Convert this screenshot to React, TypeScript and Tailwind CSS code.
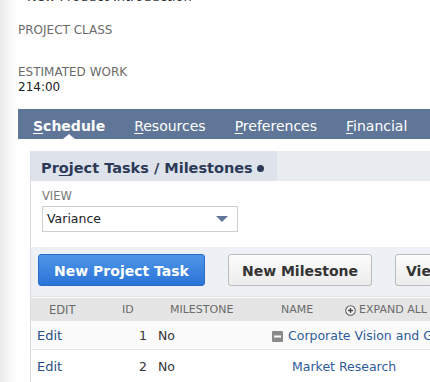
import React from 'react';

const font = { fontFamily: '"DejaVu Sans", Verdana, sans-serif' };

const Tab: React.FC<{ label: string; active?: boolean }> = ({ label, active }) => (
  <div className={`relative h-full shrink-0 flex items-center pt-[4px] text-[14px] text-white ${active ? 'font-bold' : ''}`}>
    <span>
      <span className="underline underline-offset-2">{label[0]}</span>
      {label.slice(1)}
    </span>
    {active && (
      <span className="absolute bottom-0 left-1/2 -translate-x-1/2 w-0 h-0 border-l-[6px] border-r-[6px] border-b-[5px] border-l-transparent border-r-transparent border-b-white" />
    )}
  </div>
);

const MinusBox = () => (
  <svg width="11" height="11" viewBox="0 0 11 11" className="shrink-0">
    <rect x="0" y="0" width="11" height="11" rx="1" fill="#8a8a8a" />
    <rect x="2" y="4.5" width="7" height="2" fill="#fff" />
  </svg>
);

const PlusCircle = () => (
  <svg width="11" height="11" viewBox="0 0 12 12" className="shrink-0">
    <circle cx="6" cy="6" r="5.2" fill="#fff" stroke="#555" strokeWidth="1.1" />
    <path d="M6 3.2v5.6M3.2 6h5.6" stroke="#444" strokeWidth="1.5" />
  </svg>
);

const rows = [
  { id: 1, milestone: 'No', name: 'Corporate Vision and Goals', parent: true },
  { id: 2, milestone: 'No', name: 'Market Research', parent: false },
];

export default function App() {
  return (
    <div className="w-[430px] h-[382px] overflow-hidden bg-white flex" style={font}>
      <div className="w-[18px] shrink-0 bg-gradient-to-r from-[#ebebeb] via-[#f6f6f6] to-white" />
      <div className="flex-1 min-w-0">
        {/* summary fields */}
        <div className="-mt-[11px] pl-[9px] text-[13px] leading-[16px] text-[#333] whitespace-nowrap">New Product Introduction</div>
        <div className="mt-[17px] text-[12px] leading-[16px] text-[#6b6b6b]">PROJECT CLASS</div>
        <div className="mt-[26px] text-[12px] leading-[16px] text-[#6b6b6b]">ESTIMATED WORK</div>
        <div className="text-[12px] leading-[14px] text-[#222]">214:00</div>

        {/* subtabs */}
        <div className="mt-[15px] h-[30px] bg-[#5f7698] flex pl-[15px] gap-[29px] whitespace-nowrap overflow-hidden">
          <Tab label="Schedule" active />
          <Tab label="Resources" />
          <Tab label="Preferences" />
          <Tab label="Financial" />
        </div>

        {/* panel */}
        <div className="mt-[12px] ml-[12px] border-l border-[#d8dce3]">
          <div className="h-[30px] flex bg-[#e8ebf0]">
            <div className="w-[246px] shrink-0 bg-[#dee3eb] flex items-center pt-[5px] pl-[10px] text-[14.5px] font-bold text-[#2c3a57] whitespace-nowrap">
              <span>
                Pr<span className="underline underline-offset-2">o</span>ject Tasks / Milestones
              </span>
              <span className="ml-[4px] w-[7px] h-[7px] rounded-full bg-[#2c3a57]" />
            </div>
          </div>

          <div className="bg-white pl-[11px] pt-[9px] pb-[15px]">
            <div className="text-[11.5px] leading-[13px] text-[#777]">VIEW</div>
            <div className="mt-[3px] w-[196px] h-[26px] border border-[#cfcfcf] flex items-center justify-between pl-[4px] pr-[9px]">
              <span className="text-[12.5px] text-[#222]">Variance</span>
              <span className="w-0 h-0 border-l-[6px] border-r-[6px] border-t-[6px] border-l-transparent border-r-transparent border-t-[#5f7698]" />
            </div>
          </div>

          <div className="bg-[#edf0f4] h-[50px] flex items-start pt-[7px] pl-[7px] gap-[23px] whitespace-nowrap border-b border-[#dfe2e7] overflow-hidden">
            <button className="h-[32px] w-[167px] shrink-0 rounded-[3px] border border-[#2a6bc6] bg-gradient-to-b from-[#4f95e8] to-[#2a74d8] text-white text-[14px] font-bold pt-[2px]">
              New Project Task
            </button>
            <button className="h-[32px] w-[144px] shrink-0 rounded-[3px] border border-[#bcbcbc] bg-gradient-to-b from-[#fbfbfb] to-[#ececec] text-[#333] text-[14px] font-bold pt-[2px]">
              New Milestone
            </button>
            <button className="h-[32px] w-[90px] shrink-0 rounded-[3px] border border-[#bcbcbc] bg-gradient-to-b from-[#fbfbfb] to-[#ececec] text-[#333] text-[14px] font-bold text-left pl-[10px] pt-[2px]">
              View
            </button>
          </div>

          <div className="mt-[1px] h-[23px] pt-[2px] bg-[#e5e5e5] flex items-center text-[11px] text-[#6b6b6b] whitespace-nowrap overflow-hidden">
            <div className="w-[80px] shrink-0 pl-[18px] text-[11.5px]">EDIT</div>
            <div className="w-[36px] shrink-0 pl-[11px]">ID</div>
            <div className="w-[134px] shrink-0 pl-[23px]">MILESTONE</div>
            <div className="w-[64px] shrink-0">NAME</div>
            <div className="flex items-center gap-[3px] shrink-0">
              <PlusCircle />
              <span>EXPAND ALL</span>
            </div>
          </div>

          {rows.map((r, i) => (
            <div
              key={r.id}
              className={`flex items-center pt-[2px] text-[12.5px] whitespace-nowrap overflow-hidden ${i === 0 ? 'h-[29px] bg-[#fafafa] border-b border-[#e6e6e6]' : 'h-[32px] bg-white'}`}
            >
              <div className="w-[80px] shrink-0 pl-[6px] text-[#2a4d85] text-[13px]">Edit</div>
              <div className="w-[36px] shrink-0 text-right text-[#333]">{r.id}</div>
              <div className="w-[125px] shrink-0 pl-[11px] text-[#333]">{r.milestone}</div>
              <div className="flex items-center gap-[5px] text-[#2e5c99] shrink-0">
                {r.parent ? <MinusBox /> : <span className="w-[15px]" />}
                <span>{r.name}</span>
              </div>
            </div>
          ))}
        </div>
      </div>
    </div>
  );
}
